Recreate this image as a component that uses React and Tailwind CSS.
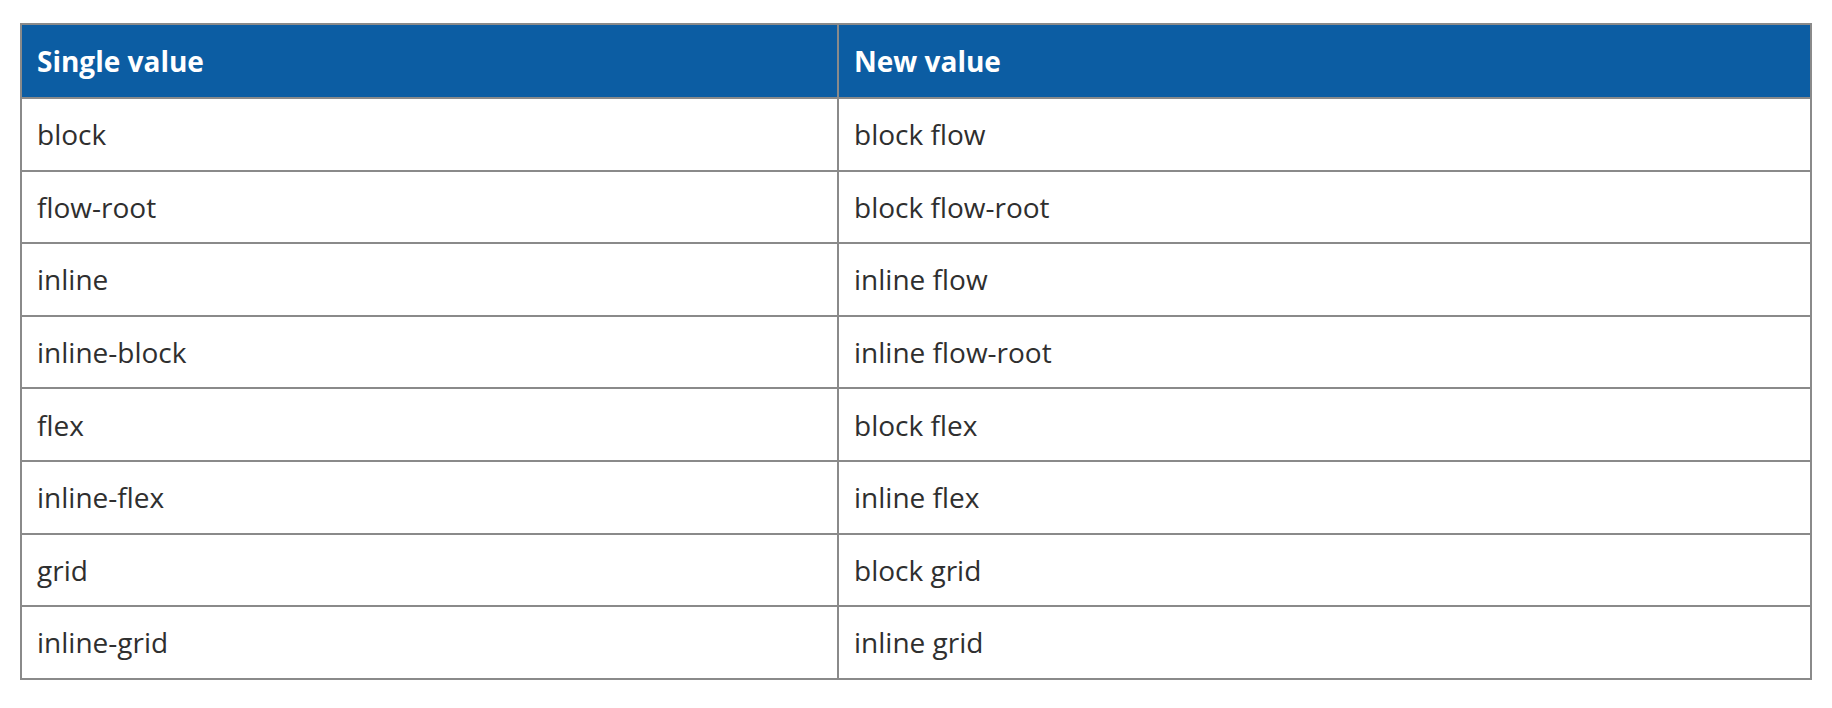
const rows = [
  ['block', 'block flow'],
  ['flow-root', 'block flow-root'],
  ['inline', 'inline flow'],
  ['inline-block', 'inline flow-root'],
  ['flex', 'block flex'],
  ['inline-flex', 'inline flex'],
  ['grid', 'block grid'],
  ['inline-grid', 'inline grid'],
];

export default function App() {
  return (
    <div className="min-h-screen bg-white pt-[23px] pl-[20px] font-['Open_Sans',sans-serif]">
      <div className="w-[1792px] border-2 border-[#8a8a8a]">
        {/* Header */}
        <div className="flex h-[72px] bg-[#0c5da3] text-white text-[28px] font-bold">
          <div className="w-[817px] border-r-2 border-[#8a8a8a] flex items-center px-[15px]">Single value</div>
          <div className="flex-1 flex items-center px-[15px]">New value</div>
        </div>

        {/* Rows */}
        {rows.map(([single, next]) => (
          <div key={single} className="flex h-[72.6px] border-t-2 border-[#8a8a8a] text-[28px] text-[#2f2f2f]">
            <div className="w-[817px] border-r-2 border-[#8a8a8a] flex items-center px-[15px]">{single}</div>
            <div className="flex-1 flex items-center px-[15px]">{next}</div>
          </div>
        ))}
      </div>
    </div>
  );
}
